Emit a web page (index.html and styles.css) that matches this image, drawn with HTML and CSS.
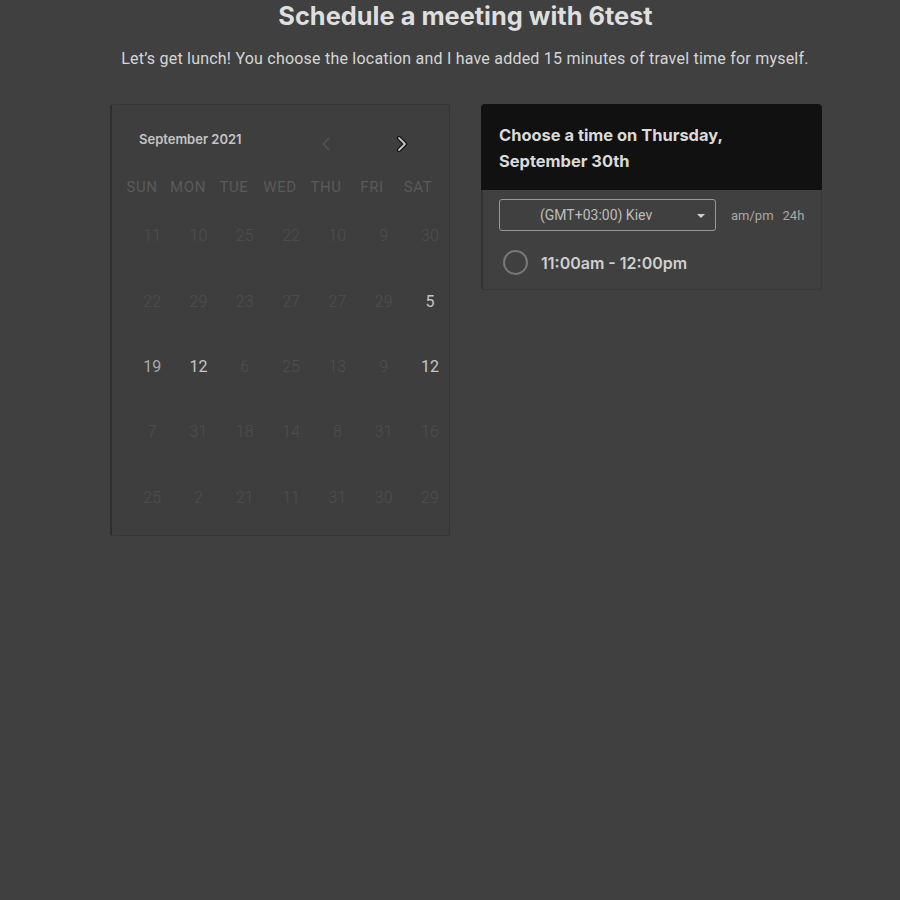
FILE: index.html
```html
<!DOCTYPE html>
<html lang="en">
<head>
<meta charset="utf-8">
<title>Schedule a meeting</title>
<link rel="stylesheet" href="styles.css">
</head>
<body>
<header class="intro">
  <h1 class="title">Schedule a meeting with 6test</h1>
  <p class="subtitle">Let’s get lunch! You choose the location and I have added 15 minutes of travel time for myself.</p>
</header>
<main class="main">
  <section class="calendar">
    <div class="cal-head">
      <span class="month">September 2021</span>
      <button class="nav prev" aria-label="Previous month">
        <svg width="12" height="16" viewBox="0 0 12 16"><path d="M8.5 2.5 L3.5 8 L8.5 13.5" fill="none" stroke="#555" stroke-width="1.6" stroke-linecap="round" stroke-linejoin="round"/></svg>
      </button>
      <button class="nav next" aria-label="Next month">
        <svg width="14" height="18" viewBox="0 0 14 18"><path d="M4 3 L10 9 L4 15" fill="none" stroke="#111" stroke-width="4.4" stroke-linecap="round" stroke-linejoin="round"/><path d="M4 3 L10 9 L4 15" fill="none" stroke="#c4c4c4" stroke-width="1.8" stroke-linecap="round" stroke-linejoin="round"/></svg>
      </button>
    </div>
    <div class="weekdays">
      <span>SUN</span><span>MON</span><span>TUE</span><span>WED</span><span>THU</span><span>FRI</span><span>SAT</span>
    </div>
    <div class="days">
      <span>11</span><span>10</span><span>25</span><span>22</span><span>10</span><span>9</span><span>30</span>
      <span>22</span><span>29</span><span>23</span><span>27</span><span>27</span><span>29</span><span class="on">5</span>
      <span class="mid">19</span><span class="on">12</span><span>6</span><span>25</span><span>13</span><span>9</span><span class="on">12</span>
      <span>7</span><span>31</span><span>18</span><span>14</span><span>8</span><span>31</span><span>16</span>
      <span>25</span><span>2</span><span>21</span><span>11</span><span>31</span><span>30</span><span>29</span>
    </div>
  </section>
  <section class="times">
    <div class="times-head">Choose a time on Thursday,<br>September 30th</div>
    <div class="times-body">
      <div class="controls">
        <div class="select">
          <span>(GMT+03:00) Kiev</span>
          <span class="caret"></span>
        </div>
        <div class="format"><span>am/pm</span><span>24h</span></div>
      </div>
      <div class="slot">
        <span class="radio"></span>
        <span class="slot-text">11:00am - 12:00pm</span>
      </div>
    </div>
  </section>
</main>
</body>
</html>
```

FILE: styles.css
```css
* { box-sizing: border-box; }

html, body {
  margin: 0;
  background: #404040;
}

body {
  width: 900px;
  min-height: 900px;
  font-family: Inter, "Noto Sans", sans-serif;
  color: #dcdcdc;
}

.intro {
  text-align: center;
}

.title {
  margin: 0;
  padding-left: 31px;
  font-size: 25.4px;
  line-height: 32px;
  font-weight: 700;
  color: #dedede;
}

.subtitle {
  margin: 11px 0 0;
  font-family: Roboto, "Liberation Sans", sans-serif;
  font-size: 16px;
  line-height: 32px;
  font-weight: 400;
  letter-spacing: 0.22px;
  color: #d6d6d6;
  padding-left: 30px;
}

.main {
  display: flex;
  align-items: flex-start;
  gap: 31px;
  margin: 29px 0 0 110px;
}

.calendar {
  width: 340px;
  height: 432px;
  background: #3e3e3e;
  border: 1px solid #363636;
  border-left: 2px solid #2e2e2e;
  border-radius: 3px;
  padding: 0 0 0 8px;
}

.cal-head {
  display: flex;
  align-items: center;
  height: 66px;
  padding-top: 8px;
}

.month {
  margin-left: 19px;
  font-size: 13px;
  font-weight: 600;
  color: #c4c4c4;
  padding-bottom: 6px;
}

.nav {
  background: none;
  border: 0;
  padding: 0;
  display: flex;
  align-items: center;
}

.prev { margin-left: 78px; margin-top: 3px; }
.next { margin-left: 63px; margin-top: 3px; }

.weekdays, .days {
  display: grid;
  grid-template-columns: repeat(7, 46px);
}

.weekdays {
  height: 32px;
  align-items: center;
  margin-left: -1px;
  font-family: Roboto, "Liberation Sans", sans-serif;
  font-size: 15px;
  letter-spacing: 0.6px;
  color: #5a5a5a;
}

.weekdays span {
  text-align: center;
}

.days {
  grid-template-columns: repeat(7, 46.3px);
  grid-auto-rows: 65.4px;
  margin-left: 9px;
  font-family: Roboto, "Liberation Sans", sans-serif;
  font-size: 16px;
  font-weight: 300;
  color: #4e4e4e;
}

.days span {
  display: flex;
  align-items: center;
  justify-content: center;
}

.days .on { color: #c6c6c6; font-weight: 400; }
.days .mid { color: #a8a8a8; font-weight: 400; }

.times {
  width: 341px;
}

.times-head {
  background: #111111;
  border-radius: 4px 4px 0 0;
  height: 86px;
  padding: 18px 18px 0;
  font-size: 16.45px;
  line-height: 26px;
  font-weight: 700;
  color: #dadada;
}

.times-body {
  border: 1px solid #383838;
  border-top: 0;
  border-left: 2px solid #333;
  border-radius: 0 0 3px 3px;
  padding: 9px 0 14px 16px;
}

.controls {
  display: flex;
  align-items: center;
  gap: 16px;
}

.select {
  position: relative;
  width: 217px;
  height: 32px;
  border: 1px solid #9a9a9a;
  border-radius: 3px;
  display: flex;
  align-items: center;
  padding-left: 40px;
  font-family: Roboto, "Liberation Sans", sans-serif;
  font-size: 14px;
  color: #bdbdbd;
}

.caret {
  position: absolute;
  right: 10px;
  top: 14px;
  width: 0;
  height: 0;
  border-left: 4px solid transparent;
  border-right: 4px solid transparent;
  border-top: 4px solid #d0d0d0;
}

.format {
  display: flex;
  gap: 9px;
  margin-left: -1px;
  font-family: Roboto, "Liberation Sans", sans-serif;
  font-size: 13px;
  color: #a8a8a8;
}

.slot {
  display: flex;
  align-items: center;
  gap: 13px;
  margin-top: 19px;
  padding-left: 4px;
}

.radio {
  width: 25px;
  height: 25px;
  border: 2px solid #777;
  border-radius: 50%;
}

.slot-text {
  font-size: 16px;
  font-weight: 600;
  color: #cfcfcf;
}
```
